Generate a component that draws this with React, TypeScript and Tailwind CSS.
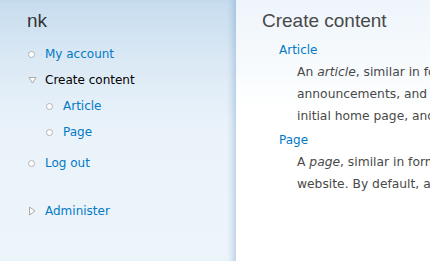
import type { ReactNode } from "react";

type MenuItem = {
  label: string;
  kind: "leaf" | "expanded" | "collapsed";
  active?: boolean;
  gap: string;
  children?: MenuItem[];
};

const menu: MenuItem[] = [
  { label: "My account", kind: "leaf", gap: "mt-[11px]" },
  {
    label: "Create content",
    kind: "expanded",
    active: true,
    gap: "mt-[8px]",
    children: [
      { label: "Article", kind: "leaf", gap: "mt-[8px]" },
      { label: "Page", kind: "leaf", gap: "mt-[8px]" },
    ],
  },
  { label: "Log out", kind: "leaf", gap: "mt-[13px]" },
  { label: "Administer", kind: "collapsed", gap: "mt-[30px]" },
];

function Marker({ kind }: { kind: MenuItem["kind"] }) {
  if (kind === "expanded") {
    return (
      <svg width="9" height="8" viewBox="0 0 9 8" className="shrink-0">
        <path d="M1 1.5 H8 L4.5 7 Z" fill="#fff" stroke="#a9a9a9" strokeWidth="1" />
      </svg>
    );
  }
  if (kind === "collapsed") {
    return (
      <svg width="8" height="10" viewBox="0 0 8 10" className="shrink-0">
        <path d="M1.5 1 L7 5 L1.5 9 Z" fill="#fff" stroke="#a9a9a9" strokeWidth="1" />
      </svg>
    );
  }
  return <span className="h-[7px] w-[7px] shrink-0 rounded-full border border-[#b3b3b3] bg-white" />;
}

function MenuRow({ item }: { item: MenuItem }) {
  return (
    <li className={item.gap}>
      <div className="flex h-[18px] items-center">
        <span className="flex w-[18px] items-center pl-[1px]">
          <Marker kind={item.kind} />
        </span>
        <span className={item.active ? "text-black" : "text-[#027ac6]"}>{item.label}</span>
      </div>
      {item.children ? (
        <ul className="pl-[18px]">
          {item.children.map((child) => (
            <MenuRow key={child.label} item={child} />
          ))}
        </ul>
      ) : null}
    </li>
  );
}

function ContentType({ title, lines }: { title: string; lines: ReactNode[] }) {
  return (
    <div>
      <div className="pl-[17px] leading-[21px] text-[#027ac6]">{title}</div>
      <div className="whitespace-nowrap pl-[35px] text-[12.3px] leading-[22px] text-[#494949]">
        {lines.map((line, i) => (
          <div key={i}>{line}</div>
        ))}
      </div>
    </div>
  );
}

export default function App() {
  return (
    <div className="flex h-[261px] w-[430px] overflow-hidden font-['DejaVu_Sans',sans-serif] text-[12px]">
      <aside className="w-[236px] shrink-0 bg-[linear-gradient(to_bottom,#c6dcee_0px,#dbe9f5_60px,#eaf3fa_130px,#edf5fa_261px)] pl-[27px] pt-[8px] shadow-[inset_-7px_0_6px_-4px_rgba(110,150,195,0.4)]">
        <h2 className="font-['Liberation_Sans',Arial,sans-serif] text-[19px] leading-[26px] text-[#333]">nk</h2>
        <ul>
          {menu.map((item) => (
            <MenuRow key={item.label} item={item} />
          ))}
        </ul>
      </aside>
      <main className="flex-1 bg-[linear-gradient(to_bottom,#eef5fb_0px,#f6fafd_60px,#ffffff_110px)] pl-[26px] pt-[9px]">
        <h1 className="font-['Liberation_Sans',Arial,sans-serif] text-[19px] leading-[24px] text-[#494949]">
          Create content
        </h1>
        <div className="mt-[7px]">
          <ContentType
            title="Article"
            lines={[
              <>
                An <em>article</em>, similar in form to a <em>page</em>, is ideal for creating and displaying content that informs or engages website visitors. Press releases, site
              </>,
              <>
                announcements, and informal blog-like entries may all be created with an <em>article</em> entry. By default, an <em>article</em> entry is automatically featured on the site's
              </>,
              <>initial home page, and provides the ability to post comments.</>,
            ]}
          />
          <div className="mt-[3px]">
            <ContentType
              title="Page"
              lines={[
                <>
                  A <em>page</em>, similar in form to an <em>article</em>, is a simple method for creating and displaying information that rarely changes, such as an "About us" section of a
                </>,
                <>
                  website. By default, a <em>page</em> entry does not allow visitor comments and is not featured on the site's initial home page.
                </>,
              ]}
            />
          </div>
        </div>
      </main>
    </div>
  );
}
